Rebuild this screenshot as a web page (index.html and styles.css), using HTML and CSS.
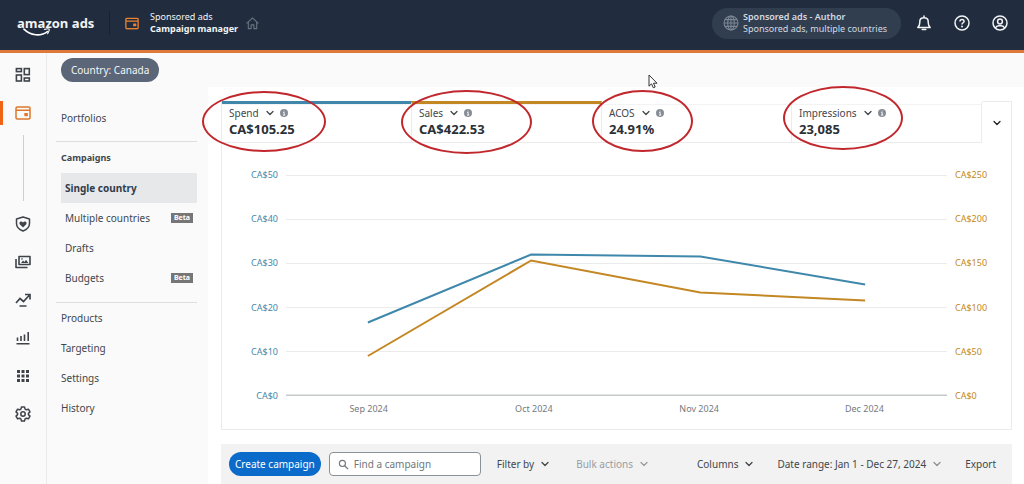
FILE: index.html
```html
<!DOCTYPE html>
<html lang="en">
<head>
<meta charset="utf-8">
<title>Campaign manager</title>
<link rel="stylesheet" href="styles.css">
</head>
<body>
<svg class="defs" aria-hidden="true">
  <symbol id="chevron" viewBox="0 0 8 8"><path d="M1 2.5 4 5.5 7 2.5" fill="none" stroke="currentColor" stroke-width="1.3" stroke-linecap="round" stroke-linejoin="round"/></symbol>
  <symbol id="info" viewBox="0 0 8 8"><circle cx="4" cy="4" r="4" fill="#878d96"/><path d="M3.2 3.5H4.2V6M3 6.1H5.2M4 1.7V2.5" fill="none" stroke="#fff" stroke-width=".9"/></symbol>
  <symbol id="wallet" viewBox="0 0 16 14"><path d="M2.2 1H13.8Q15 1 15 2.2V11.8Q15 13 13.8 13H2.2Q1 13 1 11.8V2.2Q1 1 2.2 1ZM1 4.2H15" fill="none" stroke="currentColor" stroke-width="1.5"/><rect x="9.3" y="7" width="3.6" height="3.2" rx=".6" fill="currentColor"/></symbol>
</svg>

<header class="topbar">
  <a class="logo" href="#">amazon ads
    <svg class="smile" viewBox="0 0 32 10" aria-hidden="true"><path d="M1 2C8 9 19 10 26 4.500" fill="none" stroke="#fff" stroke-width="1.700" stroke-linecap="round"/><path d="M23 2.200Q27 1 28 2 28.300 4 26.300 6.800" fill="none" stroke="#fff" stroke-width="1.200" stroke-linecap="round"/></svg>
  </a>
  <svg class="brand-icon" viewBox="0 0 16 14" aria-hidden="true"><use href="#wallet"/></svg>
  <div class="product"><span>Sponsored ads</span><strong>Campaign manager</strong></div>
  <a class="home" href="#" aria-label="Home"><svg viewBox="0 0 14 14" aria-hidden="true"><path d="M1 6.500 7 1 13 6.500M2.500 5.500V12.500H5.500V8.500H8.500V12.500H11.500V5.500" fill="none" stroke="currentColor" stroke-width="1.200" stroke-linejoin="round" stroke-linecap="round"/></svg></a>
  <button class="account" type="button">
    <svg viewBox="0 0 16 16" aria-hidden="true"><g fill="none" stroke="currentColor" stroke-width="1.100"><circle cx="8" cy="8" r="7"/><ellipse cx="8" cy="8" rx="3.300" ry="7"/><path d="M8 1V15M1 8H15M2 4.600H14M2 11.400H14"/></g></svg>
    <span class="account-text"><strong>Sponsored ads - Author</strong><span>Sponsored ads, multiple countries</span></span>
  </button>
  <div class="actions">
    <button type="button" aria-label="Notifications"><svg viewBox="0 0 16 16"><path d="M1.800 12.500Q3.800 10.500 3.800 7.500V6.500Q3.800 2.700 8 2.700T12.200 6.500V7.500Q12.200 10.500 14.200 12.500ZM8 2.700V1M6.200 14.500H9.800" fill="none" stroke="currentColor" stroke-width="1.500" stroke-linejoin="round" stroke-linecap="round"/></svg></button>
    <button type="button" aria-label="Help"><svg viewBox="0 0 16 16"><g fill="none" stroke="currentColor" stroke-width="1.500"><circle cx="8" cy="8" r="7"/><path d="M5.900 6.500Q6 4.500 8 4.500T10.100 6.300Q10.100 7.400 9 7.900 8 8.300 8 9.500" /></g><circle cx="8" cy="11.500" r=".95" fill="currentColor"/></svg></button>
    <button type="button" aria-label="Profile"><svg viewBox="0 0 16 16"><g fill="none" stroke="currentColor" stroke-width="1.500"><circle cx="8" cy="8" r="7"/><circle cx="8" cy="6.500" r="2.400"/><path d="M3.300 13Q4.500 10.700 6.500 10.700H9.500Q11.500 10.700 12.700 13"/></g></svg></button>
  </div>
</header>

<div class="shell">
  <nav class="rail" aria-label="Tools">
    <a href="#" aria-label="Overview"><svg viewBox="0 0 16 16"><g fill="none" stroke="currentColor" stroke-width="1.600"><rect x="1.400" y="1.600" width="5" height="3"/><rect x="9.300" y="1.600" width="5" height="6"/><rect x="1.400" y="8" width="5" height="6"/><rect x="9.300" y="11" width="5" height="3"/></g></svg></a>
    <a class="current" href="#" aria-label="Campaign manager"><svg viewBox="0 0 16 14"><use href="#wallet"/></svg></a>
    <span class="rail-line"></span>
    <a href="#" aria-label="Brand safety"><svg viewBox="0 0 16 16"><path d="M8 1 14.500 3V7.500Q14.500 12.500 8 15 1.500 12.500 1.500 7.500V3Z" fill="none" stroke="currentColor" stroke-width="1.500" stroke-linejoin="round"/><path d="M8 11.500 4.700 8.300Q3.900 6.700 5 5.700 6.800 4.800 8 6.400 9.200 4.800 11 5.700 12.100 6.700 11.300 8.300Z" fill="currentColor"/></svg></a>
    <a href="#" aria-label="Creatives"><svg viewBox="0 0 16 16"><path d="M4 2.500H15V10.500H4ZM1 5V13.500H12.500" fill="none" stroke="currentColor" stroke-width="1.600" stroke-linejoin="round"/><path d="M6 9 8 6.500 9.500 8 11 5.800 13.300 9Z" fill="currentColor"/><circle cx="7" cy="5" r=".8" fill="currentColor"/></svg></a>
    <a href="#" aria-label="Insights"><svg viewBox="0 0 16 16"><path d="M1 11 5 6.500 8.500 9.500 14.500 3M10 2.500H15V7.500M4.500 14H11.500" fill="none" stroke="currentColor" stroke-width="1.700"/></svg></a>
    <a href="#" aria-label="Reports"><svg viewBox="0 0 16 16"><path d="M2.500 7.500V11M6 6V11M9.500 4.500V11M13.200 2V11M1.500 13.800H14.500" fill="none" stroke="currentColor" stroke-width="1.600"/></svg></a>
    <a href="#" aria-label="All apps"><svg viewBox="0 0 16 16"><path d="M2 3.500H5M6.500 3.500H9.500M11 3.500H14M2 8H5M6.500 8H9.500M11 8H14M2 12.500H5M6.500 12.500H9.500M11 12.500H14" fill="none" stroke="currentColor" stroke-width="3"/></svg></a>
    <a href="#" aria-label="Settings"><svg viewBox="0 0 16 16"><path d="M6.500 1H9.500L10.100 3.100 11.300 3.800 13.400 3.200 15 5.900 13.400 7.400V8.600L15 10.100 13.400 12.800 11.300 12.200 10.100 12.900 9.500 15H6.500L5.900 12.900 4.700 12.200 2.600 12.800 1 10.100 2.600 8.600V7.400L1 5.900 2.600 3.200 4.700 3.800 5.900 3.100Z" fill="none" stroke="currentColor" stroke-width="1.500" stroke-linejoin="round"/><circle cx="8" cy="8" r="2.200" fill="none" stroke="currentColor" stroke-width="1.500"/></svg></a>
  </nav>

  <div class="content">
    <div class="scope"><button class="scope-pill" type="button">Country: Canada</button></div>
    <div class="columns">
      <nav class="side" aria-label="Campaign sections">
        <ul class="group first"><li><a href="#">Portfolios</a></li></ul>
        <div class="group middle">
          <h2>Campaigns</h2>
          <ul>
            <li><a class="selected" href="#">Single country</a></li>
            <li><a href="#">Multiple countries <span class="beta">Beta</span></a></li>
            <li><a href="#">Drafts</a></li>
            <li><a href="#">Budgets <span class="beta">Beta</span></a></li>
          </ul>
        </div>
        <ul class="group last"><li><a href="#">Products</a></li><li><a href="#">Targeting</a></li><li><a href="#">Settings</a></li><li><a href="#">History</a></li></ul>
      </nav>

      <main class="main">
        <section class="card">
          <div class="metrics">
            <div class="metric spend"><button type="button">Spend <svg class="chev"><use href="#chevron"/></svg></button><svg class="info"><use href="#info"/></svg><strong>CA$105.25</strong><span class="ring ring-spend"></span></div>
            <div class="metric sales"><button type="button">Sales <svg class="chev"><use href="#chevron"/></svg></button><svg class="info"><use href="#info"/></svg><strong>CA$422.53</strong><span class="ring ring-sales"></span></div>
            <div class="metric"><button type="button">ACOS <svg class="chev"><use href="#chevron"/></svg></button><svg class="info"><use href="#info"/></svg><strong>24.91%</strong><span class="ring ring-acos"></span></div>
            <div class="metric"><button type="button">Impressions <svg class="chev"><use href="#chevron"/></svg></button><svg class="info"><use href="#info"/></svg><strong>23,085</strong><span class="ring ring-impressions"></span></div>
            <button class="collapse" type="button" aria-label="Collapse chart"><svg class="chev"><use href="#chevron"/></svg></button>
          </div>
          <div class="chart">
            <div class="axis axis-left"><span>CA$50</span><span>CA$40</span><span>CA$30</span><span>CA$20</span><span>CA$10</span><span>CA$0</span></div>
            <svg class="plot" viewBox="0 0 662 221" preserveAspectRatio="none" role="img" aria-label="Spend and sales by month">
              <path class="grid" d="M0 .5H662M0 44.500H662M0 88.500H662M0 132.500H662M0 176.500H662"/>
              <path class="base" d="M0 220.500H662"/>
              <path class="line-spend" d="M82 147.500 245.500 79.500 415 81.500 580 109.500"/>
              <path class="line-sales" d="M82 181 245.500 85.500 415 117.500 580 125.500"/>
            </svg>
            <div class="axis axis-right"><span>CA$250</span><span>CA$200</span><span>CA$150</span><span>CA$100</span><span>CA$50</span><span>CA$0</span></div>
            <div class="months"><span>Sep 2024</span><span>Oct 2024</span><span>Nov 2024</span><span>Dec 2024</span></div>
          </div>
        </section>

        <div class="toolbar">
          <button class="create" type="button">Create campaign</button>
          <label class="search"><svg viewBox="0 0 12 12" aria-hidden="true"><circle cx="4.800" cy="4.800" r="3.300" fill="none" stroke="currentColor" stroke-width="1.200"/><path d="M7.300 7.300 11 11" stroke="currentColor" stroke-width="1.400"/></svg><input type="text" placeholder="Find a campaign" aria-label="Find a campaign"></label>
          <button class="tool" type="button">Filter by <svg class="chev"><use href="#chevron"/></svg></button>
          <button class="tool muted" type="button">Bulk actions <svg class="chev"><use href="#chevron"/></svg></button>
          <div class="tools-end">
            <button class="tool" type="button">Columns <svg class="chev"><use href="#chevron"/></svg></button>
            <button class="tool" type="button">Date range: Jan 1 - Dec 27, 2024 <svg class="chev light"><use href="#chevron"/></svg></button>
            <button class="tool" type="button">Export</button>
          </div>
        </div>
      </main>
    </div>
  </div>
</div>
<svg class="cursor" viewBox="0 0 10 15" aria-hidden="true"><path d="M1 1V12.200L3.500 9.800 5.300 13.800 7.200 13 5.500 9.200H9Z" fill="#fff" stroke="#333" stroke-width="1"/></svg>
</body>
</html>
```
FILE: styles.css
```css
* { box-sizing: border-box; }
body {
  margin: 0;
  min-height: 100vh;
  display: flex;
  flex-direction: column;
  overflow: hidden;
  background: #fafafa;
  color: #41474d;
  font: 10px/16px "Noto Sans", "Open Sans", sans-serif;
}
button, input { font: inherit; color: inherit; background: none; border: 0; padding: 0; }
button { white-space: nowrap; }
a { color: inherit; text-decoration: none; }
ul { list-style: none; margin: 0; padding: 0; }
svg { display: block; flex: none; }
.defs { position: absolute; width: 0; height: 0; }

.topbar {
  display: flex;
  align-items: center;
  height: 53px;
  padding: 0 16px 4px 17px;
  border-bottom: 3px solid #dd7a3b;
  background: #212d3e;
  color: #f2f4f6;
}
.logo { position: relative; width: 93px; margin-right: 15px; font: bold 13px/24px "Open Sans", sans-serif; border-right: 1px solid #162130; white-space: nowrap; }
.smile { position: absolute; left: 6px; top: 16px; width: 30px; height: 10px; }
.brand-icon { width: 14px; height: 13px; color: #ec812f; }
.product { margin: 0 8px 0 11px; display: flex; flex-direction: column; font-size: 9px; line-height: 12px; white-space: nowrap; }
.home { color: #69727e; }
.home svg { width: 13px; height: 13px; }
.account {
  display: flex;
  align-items: center;
  gap: 4px;
  width: 189px;
  height: 31px;
  margin-left: auto;
  padding-left: 11px;
  border-radius: 16px;
  background: #313e50;
  text-align: left;
}
.account svg { width: 16px; height: 16px; color: #7a8694; }
.account-text { display: flex; flex-direction: column; font-size: 9px; line-height: 12px; color: #d5dae0; }
.account-text strong { font-weight: 600; }
.actions { display: flex; gap: 22px; margin-left: 15px; }
.actions svg { width: 16px; height: 16px; }

.shell { display: flex; flex: 1; }
.rail {
  width: 47px;
  display: flex;
  flex-direction: column;
  align-items: center;
  gap: 14px;
  padding-top: 10px;
  border-right: 1px solid #ececec;
}
.rail a { display: grid; place-items: center; width: 100%; height: 24px; color: #3e444a; }
.rail svg { width: 16px; height: 16px; }
.rail .current { color: #dd782c; border-left: 3px solid #f26415; padding-right: 3px; }
.rail-line { width: 1px; height: 66px; margin: -4px 0 -3px; background: #cfcfcf; }

.content { flex: 1; min-width: 0; display: flex; flex-direction: column; }
.scope { padding: 5px 14px; }
.scope-pill { height: 24px; padding: 0 10px; border-radius: 12px; background: #5b6678; color: #f4f5f7; }
.columns { flex: 1; display: flex; }
.side { width: 161px; padding: 0 11px 0 9px; }
.group { border-bottom: 1px solid #dedede; padding-left: 5px; }
.group a { display: flex; align-items: center; justify-content: space-between; height: 30px; }
.first { padding-top: 16px; padding-bottom: 8px; }
.middle { padding-top: 8px; padding-bottom: 9px; }
.middle a { padding: 0 4px; }
.middle h2 { margin: 0 0 7px; font-size: 9px; line-height: 16px; }
.group .selected { background: #e7e8ea; font-weight: bold; color: #303d4a; }
.last { border: 0; }
.beta { padding: 0 3px; background: #767676; color: #fff; font-size: 7px; line-height: 10px; font-weight: bold; }

.main { flex: 1; min-width: 0; padding: 14px 12px 0 13px; background: #fff; }
.card { border: 1px solid #ebebeb; border-top: 0; }
.metrics { display: flex; }
.metric {
  position: relative;
  flex: 1;
  display: flex;
  flex-wrap: wrap;
  align-items: center;
  align-content: flex-start;
  column-gap: 6px;
  height: 42px;
  padding: 1px 0 0 7px;
  border-top: 3px solid transparent;
  border-right: 1px solid #ececec;
  border-bottom: 1px solid #ececec;
  box-shadow: inset 0 1px #f3f3f3;
}
.spend { border-top-color: #3f88ab; }
.sales { border-top-color: #c38723; }
.metric button, .tool { display: flex; align-items: center; gap: 7px; }
.metric strong { width: 100%; font-size: 13px; color: #2a3036; }
.chev { width: 8px; height: 8px; }
.info { width: 8px; height: 8px; }
.ring { position: absolute; border: 2px solid #c1282d; border-radius: 50%; pointer-events: none; }
.ring-spend { left: -20px; top: -13px; width: 124px; height: 61px; }
.ring-sales { left: -11px; top: -14px; width: 131px; height: 64px; }
.ring-acos { left: -10px; top: -14px; width: 101px; height: 62px; }
.ring-impressions { left: -9px; top: -18px; width: 120px; height: 64px; }
.collapse { display: grid; place-items: center; width: 29px; color: #222; border-top: 1px solid #ececec; }

.chart {
  display: grid;
  grid-template-columns: 56px 1fr 64px;
  padding: 24px 0 13px;
  font-size: 9px;
}
.axis { display: flex; flex-direction: column; justify-content: space-between; height: 237px; }
.axis-left { text-align: right; color: #3f88ab; }
.axis-right { padding-left: 8px; color: #c38723; }
.plot { width: calc(100% - 8px); height: 221px; margin: 8px 0 8px 8px; }
.plot path { fill: none; vector-effect: non-scaling-stroke; }
.grid { stroke: #ebebeb; }
.base { stroke: #c6c9c9; stroke-width: 2; }
.line-spend { stroke: #3f88ab; stroke-width: 2; }
.line-sales { stroke: #c38723; stroke-width: 2; }
.months { grid-column: 2; display: flex; margin: -3px 0 -1px 8px; color: #747a7f; }
.months span { flex: 1; text-align: center; }

.toolbar { display: flex; align-items: center; height: 40px; margin-top: 14px; padding: 0 16px 0 8px; background: #f2f2f2; }
.create { height: 24px; padding: 0 6px; border-radius: 12px; background: #0b6bcb; color: #fff; }
.search { display: flex; align-items: center; gap: 5px; width: 152px; height: 24px; margin: 0 16px 0 8px; padding: 0 8px; border: 1px solid #8c9196; border-radius: 4px; background: #fff; color: #70767b; }
.search svg { width: 11px; height: 11px; }
.search input { flex: 1; min-width: 0; outline: 0; }
.search input::placeholder { color: #70767b; opacity: 1; }
.tool + .muted { margin-left: 27px; }
.muted { color: #979da2; }
.tools-end { display: flex; gap: 24px; margin-left: auto; }
.light { color: #8c9196; }
.cursor { position: absolute; left: 648px; top: 74px; width: 10px; height: 15px; }
```
